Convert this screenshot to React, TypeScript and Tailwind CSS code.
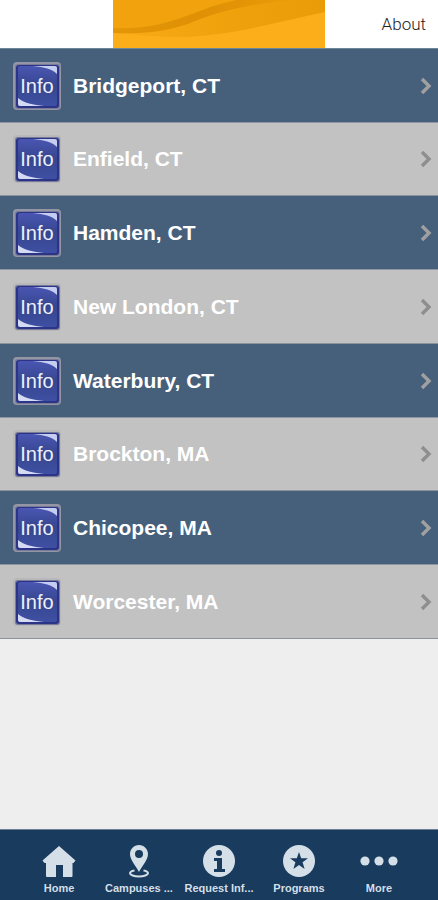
import type { ReactNode } from "react"

const campuses = [
  "Bridgeport, CT",
  "Enfield, CT",
  "Hamden, CT",
  "New London, CT",
  "Waterbury, CT",
  "Brockton, MA",
  "Chicopee, MA",
  "Worcester, MA",
]

function Banner() {
  return (
    <svg viewBox="0 0 213 48" preserveAspectRatio="none" className="block h-12 w-full" aria-hidden="true">
      <defs>
        <linearGradient id="ribbon" x1="0" y1="0" x2="1" y2="0">
          <stop offset="0" stopColor="#e39607" />
          <stop offset="0.5" stopColor="#df9005" />
          <stop offset="1" stopColor="#e99b08" />
        </linearGradient>
        <linearGradient id="shade" x1="0" y1="0" x2="1" y2="0">
          <stop offset="0" stopColor="#f9aa17" />
          <stop offset="0.5" stopColor="#f0a20d" />
          <stop offset="1" stopColor="#e99b08" />
        </linearGradient>
      </defs>
      <rect width="213" height="48" fill="#f1a20d" />
      <path d="M0 33C50 36 65 19 110 8C130 3 150 1 165 0H213V12C170 21 125 36 75 37C45 37 20 34 0 33Z" fill="url(#shade)" />
      <path d="M0 28C40 30 65 19 90 10C102 5 114 2 124 0H180C140 4 110 10 85 20C55 33 25 34 0 33Z" fill="url(#ribbon)" />
      <path d="M0 33C20 34 40 37 75 37C125 34 170 21 213 12V48H0Z" fill="#fcae1a" />
    </svg>
  )
}

function InfoTile({ framed }: { framed: boolean }) {
  return (
    <svg viewBox="0 0 48 48" className="h-12 w-12 shrink-0" aria-hidden="true">
      <defs>
        <linearGradient id="tile" x1="0" y1="0" x2="0" y2="1">
          <stop offset="0" stopColor="#4a56b2" />
          <stop offset="0.5" stopColor="#36468f" />
          <stop offset="1" stopColor="#3f50a3" />
        </linearGradient>
      </defs>
      <rect width="48" height="48" rx="4" fill={framed ? "#9496a5" : "#b8b8ba"} />
      <rect x="2" y="2" width="45" height="45" rx="3" fill="#777b99" />
      <rect x="3" y="3" width="43" height="43" rx="3" fill="#2c3488" />
      <rect x="5" y="4" width="39" height="40" rx="2" fill="url(#tile)" />
      <path d="M20 4H42Q44 4 44 6V12C39 7 31 5 20 4Z" fill="#c5cdf0" />
      <path d="M5 36C11 41 20 43 31 44H7Q5 44 5 42Z" fill="#d5dbf5" />
      <text x="24" y="31" textAnchor="middle" fontSize="20" fill="#eef1fb" className="font-['Liberation_Sans',sans-serif]">
        Info
      </text>
    </svg>
  )
}

function Chevron() {
  return (
    <svg viewBox="0 0 12 18" className="h-[18px] w-3 shrink-0" fill="none" stroke="currentColor" strokeWidth="3.4" aria-hidden="true">
      <path d="M2 2L9 9L2 16" />
    </svg>
  )
}

function HomeIcon() {
  return (
    <svg viewBox="0 0 34 34" className="h-[34px] w-[34px]" fill="currentColor" aria-hidden="true">
      <path d="M17 1L33.5 15.5L31.5 18H30.5V31Q30.5 32 29.5 32H21V20H14V32H5Q4 32 4 31V18H2.5L.5 15.5Z" />
    </svg>
  )
}

function PinIcon() {
  return (
    <svg viewBox="0 0 34 34" className="h-[34px] w-[34px]" fill="currentColor" aria-hidden="true">
      <path
        fillRule="evenodd"
        d="M17 0C12 0 8 4 8 9C8 15 14 21 17 27C20 21 26 15 26 9C26 4 22 0 17 0ZM17 5A4 4 0 1 1 17 13A4 4 0 1 1 17 5Z"
      />
      <path d="M12.5 25.5C9.5 26 8 27 8 28.3C8 30 12 31.5 17 31.5C22 31.5 26 30 26 28.3C26 27 24.5 26 21.5 25.5" fill="none" stroke="currentColor" strokeWidth="2" />
    </svg>
  )
}

function InfoIcon() {
  return (
    <svg viewBox="0 0 34 34" className="h-[34px] w-[34px]" aria-hidden="true">
      <circle cx="17" cy="16" r="16" fill="currentColor" />
      <circle cx="17" cy="8" r="3" fill="#183b5e" />
      <path d="M12 13H20V24H23V27H12V24H15V16H12Z" fill="#183b5e" />
    </svg>
  )
}

function StarIcon() {
  return (
    <svg viewBox="0 0 34 34" className="h-[34px] w-[34px]" aria-hidden="true">
      <circle cx="17" cy="16" r="16" fill="currentColor" />
      <path d="M17 7L19.2 13.2H26L20.6 17.2L22.6 24L17 20L11.4 24L13.4 17.2L8 13.2H14.8Z" fill="#183b5e" />
    </svg>
  )
}

function MoreIcon() {
  return (
    <svg viewBox="0 0 38 34" className="h-[34px] w-[38px]" fill="currentColor" aria-hidden="true">
      <circle cx="5" cy="16" r="4.6" />
      <circle cx="19" cy="16" r="4.6" />
      <circle cx="33" cy="16" r="4.6" />
    </svg>
  )
}

const tabs: { label: string; icon: ReactNode }[] = [
  { label: "Home", icon: <HomeIcon /> },
  { label: "Campuses ...", icon: <PinIcon /> },
  { label: "Request Inf...", icon: <InfoIcon /> },
  { label: "Programs", icon: <StarIcon /> },
  { label: "More", icon: <MoreIcon /> },
]

export default function App() {
  return (
    <div className="flex min-h-screen flex-col bg-[#eeeeee] font-['Liberation_Sans',Arial,sans-serif]">
      {/* Header */}
      <header className="grid grid-cols-[26fr_49fr_26fr] border-b border-[#6c8798] bg-white">
        <div />
        <Banner />
        <button className="justify-self-end pr-3 pt-0.5 font-['Roboto',sans-serif] text-[17px] font-light text-[#222222]">
          About
        </button>
      </header>

      {/* Campus list */}
      <main className="flex-1">
        <ul>
          {campuses.map((name, i) => (
            <li key={name} className="h-[74px] odd:bg-[#46607c] even:bg-[#c2c2c2] nth-[4n+2]:h-[73px]">
              <a
                href="#"
                className={
                  i % 2 === 0
                    ? "flex h-full items-center border-b border-[#8f95a3] pl-[13px] pr-1.5 text-[#a0a0a0]"
                    : "flex h-full items-center border-b border-[#8b929c] pl-[13px] pr-1.5 text-[#8e8e8e]"
                }
              >
                <InfoTile framed={i % 2 === 0} />
                <span className="flex-1 pl-3 text-[21px] font-bold leading-6 text-white">{name}</span>
                <Chevron />
              </a>
            </li>
          ))}
        </ul>
      </main>

      {/* Tab bar */}
      <nav className="flex justify-center border-t border-[#6c8198] bg-[#183b5e] pb-1.5 pt-[15px] text-[#d5dfe7]">
        {tabs.map((tab) => (
          <a key={tab.label} href="#" className="flex w-20 flex-col items-center">
            {tab.icon}
            <span className="whitespace-nowrap pt-[3px] text-[11px] font-bold leading-3">{tab.label}</span>
          </a>
        ))}
      </nav>
    </div>
  )
}
